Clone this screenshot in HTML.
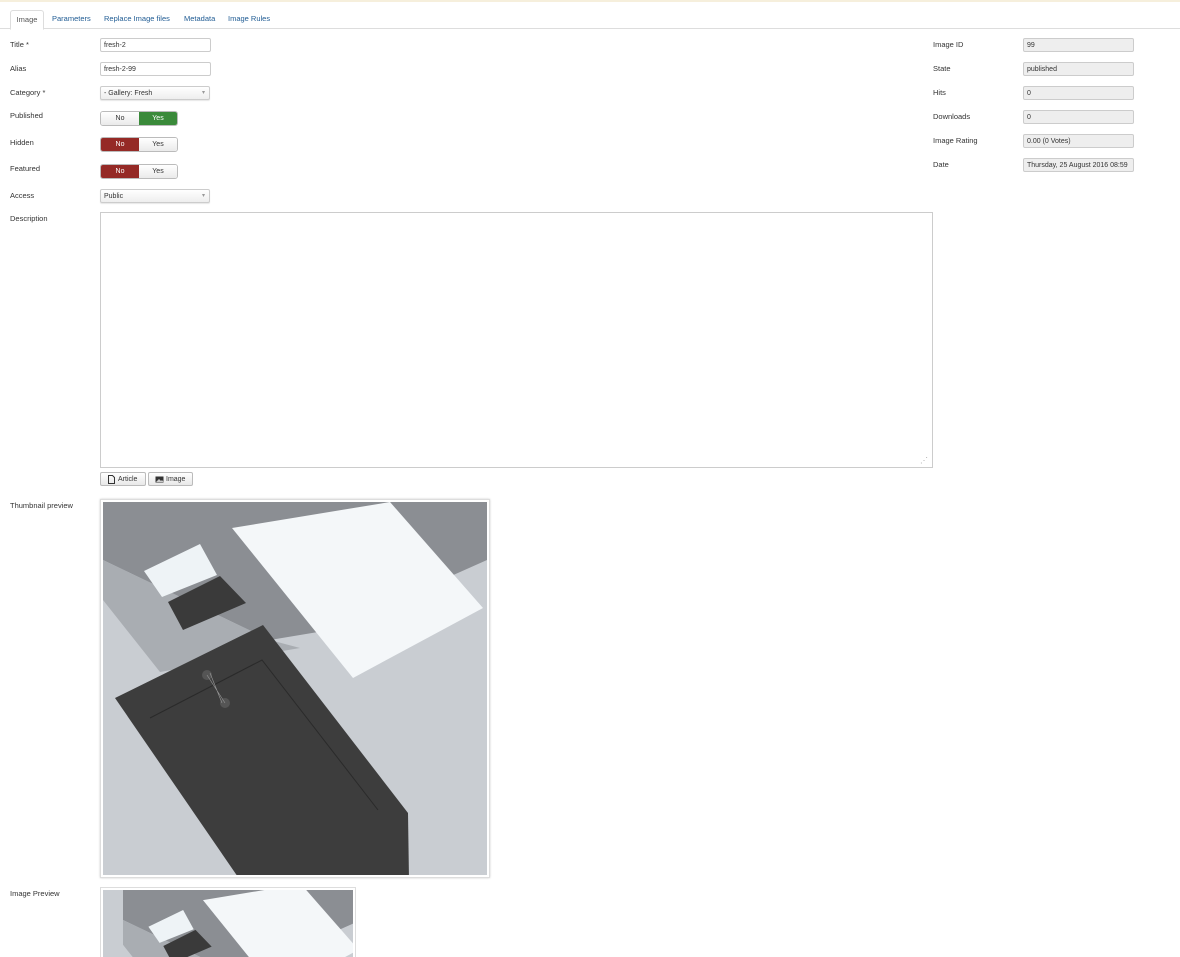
<!DOCTYPE html>
<html><head><style>
body{margin:0;width:1180px;height:957px;overflow:hidden;background:#fff;font-family:"Liberation Sans",sans-serif;font-size:7.5px;color:#333;position:relative}
.a{position:absolute}
.topline{left:0;top:0;width:1180px;height:2px;background:#f6efdc}
.tabline{left:0;top:28px;width:1180px;height:1px;background:#ddd}
.tab{top:10px;height:18px;line-height:18px;color:#1f5b93}
.act{left:10px;width:32px;border:1px solid #ddd;border-bottom:1px solid #fff;background:#fff;color:#555;text-align:center;border-radius:3px 3px 0 0}
.lbl{left:10px}
.in{border:1px solid #ccc;border-radius:2px;height:13px;line-height:13px;padding-left:3px;box-sizing:border-box;font-size:7px;background:#fff}
.ro{background:#eee;left:1023px;width:111px;height:14px;line-height:13px}
.sel{background:linear-gradient(#fff,#eee);box-shadow:0 1px 1px rgba(0,0,0,.1)}
.sel:after{content:"▾";position:absolute;right:4px;color:#999;font-size:6px}
.tg{height:15px;width:78px;border:1px solid #bbb;border-radius:3px;box-sizing:border-box;display:flex;overflow:hidden;font-size:7px;line-height:13px}
.tg span{flex:1;text-align:center;background:linear-gradient(#fff,#eaeaea);color:#333}
.tg .g{background:#3a8a3a;color:#fff}
.tg .r{background:#952a26;color:#fff}
.btn{border:1px solid #bbb;border-radius:2px;background:linear-gradient(#fff,#e8e8e8);height:14px;line-height:13px;box-sizing:border-box;font-size:7px;padding-left:17px}
</style></head><body>
<div class="a topline"></div>
<div class="a tabline"></div>
<div class="a tab act">Image</div>
<div class="a tab" style="left:52px">Parameters</div>
<div class="a tab" style="left:104px">Replace Image files</div>
<div class="a tab" style="left:184px">Metadata</div>
<div class="a tab" style="left:228px">Image Rules</div>

<div class="a lbl" style="top:40px">Title *</div>
<div class="a in" style="left:100px;top:38px;width:111px;height:14px">fresh-2</div>
<div class="a lbl" style="top:64px">Alias</div>
<div class="a in" style="left:100px;top:62px;width:111px;height:14px">fresh-2-99</div>
<div class="a lbl" style="top:88px">Category *</div>
<div class="a in sel" style="left:100px;top:86px;width:110px;height:14px">- Gallery: Fresh</div>
<div class="a lbl" style="top:111px">Published</div>
<div class="a tg" style="left:100px;top:111px"><span>No</span><span class="g">Yes</span></div>
<div class="a lbl" style="top:138px">Hidden</div>
<div class="a tg" style="left:100px;top:137px"><span class="r">No</span><span>Yes</span></div>
<div class="a lbl" style="top:164px">Featured</div>
<div class="a tg" style="left:100px;top:164px"><span class="r">No</span><span>Yes</span></div>
<div class="a lbl" style="top:191px">Access</div>
<div class="a in sel" style="left:100px;top:189px;width:110px;height:14px">Public</div>
<div class="a lbl" style="top:214px">Description</div>
<div class="a" style="left:100px;top:212px;width:833px;height:256px;border:1px solid #ccc;box-sizing:border-box"></div>
<div class="a" style="left:920px;top:456px;color:#aaa;font-size:8px">⋰</div>
<div class="a btn" style="left:100px;top:472px;width:46px"><svg class="a" style="left:6px;top:2px" width="9" height="9" viewBox="0 0 9 9"><path d="M1.5 .5h4l2 2v6h-6z" fill="none" stroke="#333"/></svg>Article</div>
<div class="a btn" style="left:148px;top:472px;width:45px"><svg class="a" style="left:6px;top:3px" width="9" height="7" viewBox="0 0 9 7"><rect x=".5" y=".5" width="8" height="6" fill="#333"/><path d="M1 6l3-3 2 2 1-1 1.5 2z" fill="#ccc"/></svg>Image</div>

<div class="a" style="left:933px;top:40px">Image ID</div>
<div class="a in ro" style="top:38px">99</div>
<div class="a" style="left:933px;top:64px">State</div>
<div class="a in ro" style="top:62px">published</div>
<div class="a" style="left:933px;top:88px">Hits</div>
<div class="a in ro" style="top:86px">0</div>
<div class="a" style="left:933px;top:112px">Downloads</div>
<div class="a in ro" style="top:110px">0</div>
<div class="a" style="left:933px;top:136px">Image Rating</div>
<div class="a in ro" style="top:134px">0.00 (0 Votes)</div>
<div class="a" style="left:933px;top:160px">Date</div>
<div class="a in ro" style="top:158px;overflow:hidden;white-space:nowrap">Thursday, 25 August 2016 08:59</div>

<div class="a lbl" style="top:501px">Thumbnail preview</div>
<div class="a" style="left:100px;top:499px;width:390px;height:379px;border:1px solid #ddd;box-sizing:border-box;box-shadow:0 0 2px #ccc"></div>
<svg class="a" style="left:103px;top:502px" width="384" height="373" viewBox="103 502 384 373">
<g id="pic">
<rect x="0" y="400" width="600" height="600" fill="#c9cdd2"/>
<polygon points="103,502 487,502 487,560 330,630 270,640 103,560" fill="#8b8e93"/>
<polygon points="103,560 270,640 300,648 160,672 103,600" fill="#a9adb2"/>
<polygon points="232,528 390,502 483,608 353,678" fill="#f4f7f9"/>
<polygon points="168,602 220,576 246,603 183,630" fill="#3a3a3a"/>
<polygon points="144,571 200,544 217,575 162,597" fill="#eef3f6"/>
<polygon points="115,698 263,625 408,813 409,880 240,880" fill="#3d3d3d"/>
<polyline points="150,718 262,660 378,810" fill="none" stroke="#2a2a2a" stroke-width="1"/>
<circle cx="207" cy="675" r="5" fill="#555"/><circle cx="225" cy="703" r="5" fill="#555"/>
<path d="M207 675l18 28M210 673l12 30" stroke="#999" stroke-width=".6"/>
</g></svg>

<div class="a lbl" style="top:889px">Image Preview</div>
<div class="a" style="left:100px;top:887px;width:256px;height:70px;border:1px solid #ddd;border-bottom:none;box-sizing:border-box"></div>
<svg class="a" style="left:103px;top:890px" width="250" height="67" viewBox="0 0 250 67">
<rect width="250" height="67" fill="#8b8e93"/>
<g transform="translate(20,-6) scale(0.62) translate(-103,-502)"><use href="#pic"/></g>
</svg>
</body></html>
